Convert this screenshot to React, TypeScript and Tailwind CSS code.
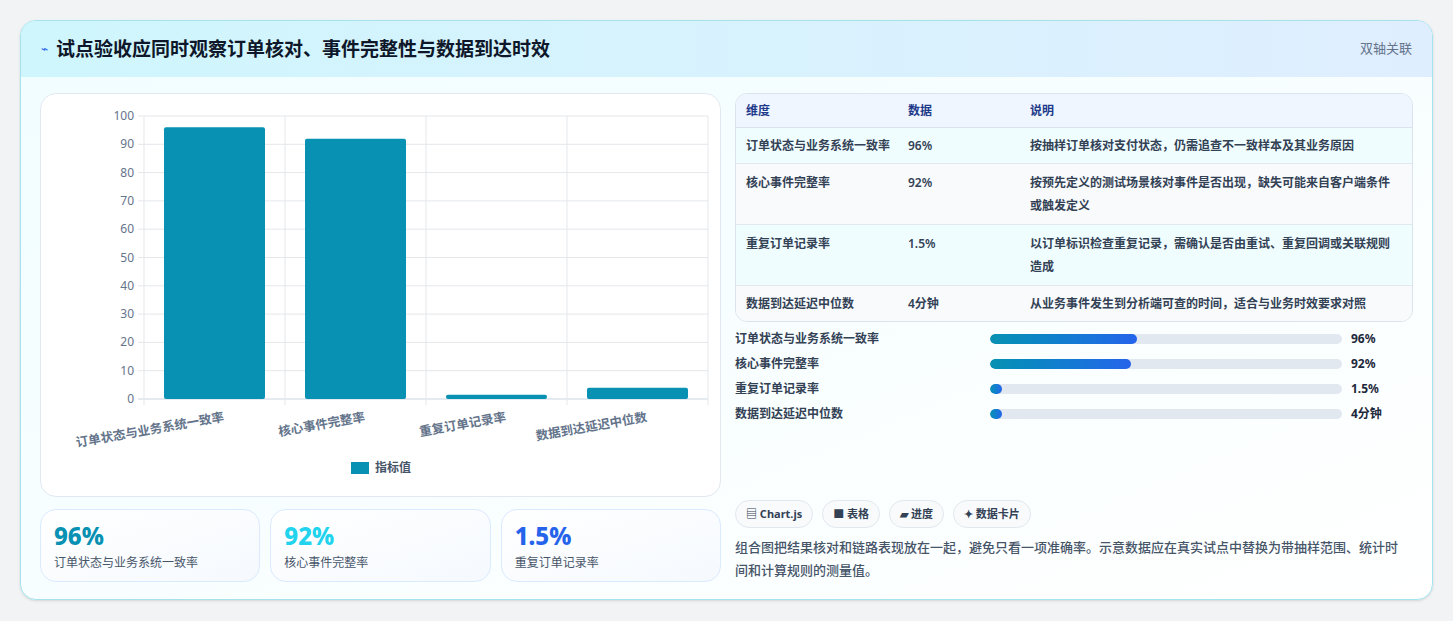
import React from "react";

const F = { fontFamily: '"Noto Sans","Noto Sans CJK SC",sans-serif' };

function Chart() {
  const labels = ["订单状态与业务系统一致率", "核心事件完整率", "重复订单记录率", "数据到达延迟中位数"];
  const vals = [96, 92, 1.5, 4];
  const x0 = 103, x1 = 667, y0 = 22, y1 = 305;
  const cw = (x1 - x0) / 4;
  const ticks = [0, 10, 20, 30, 40, 50, 60, 70, 80, 90, 100];
  return (
    <svg width="680" height="403" style={F}>
      {ticks.map((t) => {
        const y = y1 - (t / 100) * (y1 - y0);
        return (
          <g key={t}>
            <line x1={x0 - 6} x2={x1} y1={y} y2={y} stroke={t === 0 ? "#cbd5e1" : "#e5e7eb"} />
            <text x={x0 - 10} y={y + 4} textAnchor="end" fontSize="12" fill="#64748b">{t}</text>
          </g>
        );
      })}
      {[0, 1, 2, 3, 4].map((i) => (
        <line key={i} x1={x0 + i * cw} x2={x0 + i * cw} y1={y0} y2={y1 + 6} stroke="#e5e7eb" />
      ))}
      {vals.map((v, i) => {
        const h = (v / 100) * (y1 - y0);
        return <rect key={i} x={x0 + i * cw + 20} y={y1 - h} width={101} height={h} rx="2" fill="#0891b2" />;
      })}
      {labels.map((l, i) => {
        const cx = x0 + i * cw + cw / 2 + 10;
        return (
          <text key={i} x={cx} y={y1 + 22} textAnchor="end" fontSize="12.5" fontWeight="600" fill="#64748b" transform={`rotate(-10 ${cx} ${y1 + 22})`}>{l}</text>
        );
      })}
      <rect x="310" y="368" width="18" height="12" fill="#0891b2" />
      <text x="334" y="378" fontSize="12" fill="#475569" fontWeight="600">指标值</text>
    </svg>
  );
}

const rows = [
  ["订单状态与业务系统一致率", "96%", "按抽样订单核对支付状态，仍需追查不一致样本及其业务原因"],
  ["核心事件完整率", "92%", "按预先定义的测试场景核对事件是否出现，缺失可能来自客户端条件或触发定义"],
  ["重复订单记录率", "1.5%", "以订单标识检查重复记录，需确认是否由重试、重复回调或关联规则造成"],
  ["数据到达延迟中位数", "4分钟", "从业务事件发生到分析端可查的时间，适合与业务时效要求对照"],
];
const bars: [string, string, number][] = [
  ["订单状态与业务系统一致率", "96%", 147],
  ["核心事件完整率", "92%", 141],
  ["重复订单记录率", "1.5%", 12],
  ["数据到达延迟中位数", "4分钟", 12],
];

export default function App() {
  return (
    <div className="min-h-screen bg-[#f1f3f5] p-5 pb-0" style={F}>
      <div className="w-[1413px] h-[580px] rounded-2xl border border-[#a5e4ee] bg-gradient-to-br from-[#f0fdff] to-white overflow-hidden shadow-sm">
        <div className="h-[56px] flex items-center justify-between px-5 bg-gradient-to-r from-[#cff6fd] to-[#dfeefe]">
          <div className="flex items-center gap-2">
            <span className="text-[12px] text-[#2563eb]">⌁</span>
            <span className="text-[19px] font-bold text-[#0f172a]">试点验收应同时观察订单核对、事件完整性与数据到达时效</span>
          </div>
          <span className="text-[13px] text-[#64748b]">双轴关联</span>
        </div>
        <div className="flex gap-[14px] px-[19px] pt-4">
          <div className="w-[681px] flex flex-col gap-3">
            <div className="h-[404px] rounded-2xl border border-[#e2e8f0] bg-white">
              <Chart />
            </div>
            <div className="grid grid-cols-3 gap-[10px]">
              {[["96%", "text-[#0891b2]", "订单状态与业务系统一致率"], ["92%", "text-[#22d3ee]", "核心事件完整率"], ["1.5%", "text-[#2563eb]", "重复订单记录率"]].map(([v, c, l]) => (
                <div key={v} className="h-[73px] rounded-2xl border border-[#dbeafe] bg-gradient-to-br from-white to-[#f5f9fe] px-[13px] pt-[11px]">
                  <div className={`text-[24px] leading-[30px] font-extrabold ${c}`}>{v}</div>
                  <div className="text-[12px] text-[#475569] mt-[3px]">{l}</div>
                </div>
              ))}
            </div>
          </div>
          <div className="flex-1 flex flex-col">
            <div className="rounded-xl border border-[#dbe3ec] overflow-hidden text-[12px] font-semibold text-[#334155]">
              <div className="grid grid-cols-[162px_122px_1fr] h-[34px] items-center px-[10px] bg-[#eff6ff] text-[#1e3a8a] border-b border-[#dbe3ec]">
                <span>维度</span><span>数据</span><span>说明</span>
              </div>
              {rows.map((r, i) => (
                <div key={i} className={`grid grid-cols-[162px_122px_1fr] px-[10px] items-start leading-[23px] ${i === 1 || i === 2 ? "py-[7px]" : "py-[6px]"} ${i % 2 ? "bg-[#f8fafc]" : "bg-[#f0fdff]"} ${i < 3 ? "border-b border-[#e2e8f0]" : ""}`}>
                  <span>{r[0]}</span><span>{r[1]}</span><span className="pr-2">{r[2]}</span>
                </div>
              ))}
            </div>
            <div className="mt-[8px] flex flex-col gap-[7px]">
              {bars.map(([l, v, w]) => (
                <div key={l} className="flex items-center h-[18px] text-[12px] font-semibold text-[#334155]">
                  <span className="w-[255px]">{l}</span>
                  <div className="w-[352px] h-[10px] rounded-full bg-[#e2e8f0] overflow-hidden">
                    <div className="h-full rounded-full bg-gradient-to-r from-[#0891b2] to-[#2563eb]" style={{ width: w }} />
                  </div>
                  <span className="ml-[9px] font-bold text-[#1e293b]">{v}</span>
                </div>
              ))}
            </div>
            <div className="mt-auto">
              <div className="flex gap-[9px]">
                {["▤ Chart.js", "■ 表格", "▰ 进度", "✦ 数据卡片"].map((c) => (
                  <span key={c} className="h-[28px] px-[10px] rounded-full border border-[#e2e8f0] bg-[#f8fafc] text-[11px] font-bold text-[#334155] flex items-center">{c}</span>
                ))}
              </div>
              <p className="mt-[8px] text-[13px] leading-[23px] text-[#475569] font-medium pr-2">组合图把结果核对和链路表现放在一起，避免只看一项准确率。示意数据应在真实试点中替换为带抽样范围、统计时间和计算规则的测量值。</p>
            </div>
          </div>
        </div>
      </div>
    </div>
  );
}
